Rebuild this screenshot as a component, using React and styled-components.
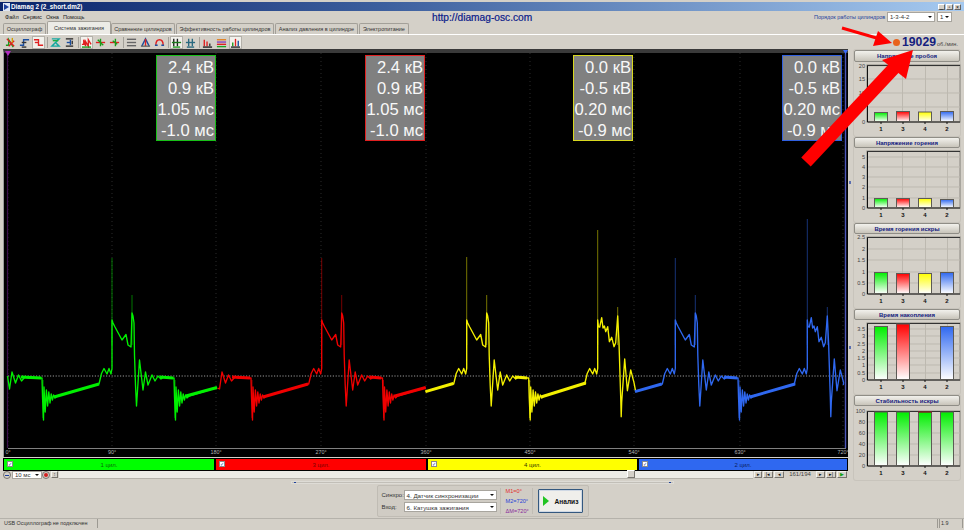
import React from "react";
import styled, { createGlobalStyle } from "styled-components";

const Global = createGlobalStyle`
  html, body { margin: 0; padding: 0; background: #d4d0c8; overflow: hidden; }
  * { box-sizing: border-box; }
`;
const FONT = `"Liberation Sans", Arial, sans-serif`;

const Page = styled.div`
  position: relative; width: 964px; height: 530px; background: #d4d0c8;
  font-family: ${FONT}; display: flex; flex-direction: column; overflow: hidden; color: #222;
`;
const TitleBar = styled.div`
  height: 9px; margin-top: 2px; display: flex; align-items: center; padding: 0 3px;
  background: linear-gradient(90deg, #0a246a 0%, #3d5f9e 40%, #a6caf0 100%);
`;
const TitleText = styled.span`
  color: #fff; font-size: 6.3px; font-weight: bold; margin-left: 1px; line-height: 9px; white-space: nowrap;
`;
const WinButtons = styled.div` margin-left: auto; display: flex; gap: 1px; `;
const WinButton = styled.span`
  width: 7px; height: 6px; background: #d4d0c8; border: 1px solid #666; border-top-color: #fff; border-left-color: #fff;
  font-size: 5px; line-height: 4px; text-align: center; color: #000;
`;
const MenuRow = styled.div` height: 12px; display: flex; align-items: center; position: relative; padding: 0 2px 0 5px; `;
const MenuGroup = styled.div` width: 80px; flex: none; display: flex; `;
const MenuItem = styled.span` font-size: 5.6px; color: #222; margin-right: 4px; white-space: nowrap; `;
const Url = styled.span`
  margin-left: 347px; width: 382px; flex: none; color: #0a1a8a; font-size: 10.2px; white-space: nowrap; -webkit-text-stroke: .2px #0a1a8a;
`;
const OrderLabel = styled.span` color: #1d3f9c; font-size: 5.5px; width: 73px; flex: none; white-space: nowrap; `;
const Combo = styled.div`
  display: flex; align-items: center; justify-content: space-between;
  width: ${p => p.$w}px; height: ${p => p.$h || 10}px; background: #fff; border: 1px solid #a8a59e;
  font-size: ${p => p.$fs || 6}px; padding: 0 2px; color: #333; white-space: nowrap; flex: none;
`;
const Caret = styled.i`
  width: 0; height: 0; border: 2px solid transparent; border-top: 2.5px solid #111; border-bottom: 0; flex: none;
`;
const TabRow = styled.div`
  height: 12px; display: flex; align-items: flex-end; padding-left: 3px; border-bottom: 1px solid #fff;
`;
const Tab = styled.div`
  height: ${p => (p.$active ? 13 : 11)}px; width: ${p => p.$w}px; flex: none; font-size: 5.5px; white-space: nowrap;
  display: flex; align-items: center; justify-content: center; color: #333;
  background: ${p => (p.$active ? "#ecebe6" : "#d4d0c8")};
  border: 1px solid #a3a099; border-bottom: 0; border-radius: 2px 2px 0 0; margin-right: ${p => (p.$active ? 0 : 1)}px;
`;
const Toolbar = styled.div`
  height: 14px; display: flex; align-items: center; padding-left: 4px; position: relative;
`;
const ToolBtn = styled.span`
  width: 13px; height: 13px; display: flex; align-items: center; justify-content: center; flex: none; margin-right: 1px;
  background: ${p => (p.$active ? "#f2f1ec" : "transparent")};
  border: 1px solid ${p => (p.$active ? "#b4b1aa" : "transparent")};
`;
const ToolSep = styled.i` width: 1px; height: 11px; background: #a3a099; margin: 0 1px; flex: none; `;
const Rpm = styled.div` margin-left: auto; display: flex; align-items: baseline; padding-right: 6px; position: relative; `;
const RpmDot = styled.i`
  width: 7px; height: 7px; border-radius: 50%; background: #e8621c; margin-right: 2px; align-self: center;
`;
const RpmValue = styled.span` color: #14207e; font-size: 12.2px; font-weight: bold; line-height: 12px; `;
const RpmUnit = styled.span` color: #444; font-size: 5.6px; margin-left: 1px; `;

const Workspace = styled.div` flex: none; height: 469px; display: flex; padding-left: 3px; `;
const LeftCol = styled.div` width: 845px; flex: none; display: flex; flex-direction: column; `;
const Scope = styled.div`
  position: relative; height: 408px; background: #000; border-top: 4px solid #3a3a3a; border-left: 1px solid #9a9a9a; flex: none;
`;
const ScopeSvg = styled.svg` position: absolute; left: -1px; top: -4px; display: block; `;
const Readout = styled.div`
  position: absolute; top: 2px; left: ${p => p.$x - 4}px; width: 60px; height: 86px; background: #808080;
  border: 1px solid ${p => p.$c}; color: #f8f8f8; font-size: 16.6px; line-height: 21px; text-align: right; padding: 1px 1px 0 0;
  white-space: nowrap;
`;
const ChannelBar = styled.div`
  margin-top: 1px; height: 13px; background: #000; display: flex; gap: 2px; padding: 1px 1px 1px 1px; flex: none;
`;
const Channel = styled.div`
  flex: ${p => p.$w} 0 0; background: ${p => p.$c}; position: relative; display: flex; align-items: center; justify-content: center;
  font-size: 6px; color: ${p => p.$t};
`;
const Check = styled.span`
  position: absolute; left: 3px; top: 2px; width: 6px; height: 6px; background: #fff; border: 1px solid #8a8a8a;
  font-size: 5px; line-height: 4px; color: #123a9c; text-align: center;
`;
const ZoomRow = styled.div` height: 8px; display: flex; align-items: stretch; flex: none; `;
const RoundBtn = styled.span`
  width: 8px; height: 8px; border-radius: 50%; background: #d4d0c8; border: 1px solid #77746e; flex: none;
  display: flex; align-items: center; justify-content: center; margin-right: ${p => p.$mr || 0}px;
`;
const Dot = styled.i` width: 4px; height: ${p => p.$h || 4}px; background: ${p => p.$c}; border-radius: ${p => (p.$h ? 0 : "50%")}; `;
const SmallBtn = styled.span`
  width: ${p => p.$w || 8}px; height: 7px; background: #d4d0c8; border: 1px solid; border-color: #f4f3ef #77746e #77746e #f4f3ef;
  flex: none; display: flex; align-items: center; justify-content: center; font-size: 5px; color: ${p => p.$c || "#111"}; margin-right: 1px;
  line-height: 1;
`;
const Track = styled.div` flex: 1; background: #ecebe6; position: relative; border-bottom: 1px solid #b5b2ab; display: flex; margin-right: 1px; `;
const Thumb = styled.span`
  position: absolute; left: 568px; top: -1px; width: 8px; height: 8px; background: #d4d0c8; border: 1px solid; border-color: #fff #77746e #77746e #fff;
`;
const PageCounter = styled.span`
  width: 30px; height: 7px; background: #d4d0c8; font-size: 6px; line-height: 7px; text-align: center; color: #444; margin-right: 1px; flex: none;
`;
const SliderRow = styled.div` height: 6px; display: flex; align-items: center; justify-content: center; flex: none; padding-left: 114px; `;
const Slider = styled.div`
  width: 383px; height: 3px; background: #c2bfb8; border: 1px solid #dedcd6; display: flex; justify-content: space-between; align-items: center; padding: 0 2px;
`;
const SliderEnd = styled.i` width: 2px; height: 1px; background: #1d3f9c; `;
const ControlsRow = styled.div` flex: 1; display: flex; justify-content: center; padding: 0 0 1px 114px; `;
const ControlBox = styled.div`
  width: 212px; height: 32px; border: 1px solid #c0bcb4; border-radius: 2px; background: #d0ccc4; display: flex; align-items: center; padding-left: 4px;
`;
const SelectGrid = styled.div` display: grid; grid-template-columns: 22px 93px; row-gap: 2px; align-items: center; `;
const FieldLabel = styled.span` font-size: 6px; color: #333; `;
const Markers = styled.div`
  margin-left: 3px; padding: 0 0 0 5px; width: 33px; height: 26px; display: flex; flex-direction: column; justify-content: space-between;
  border-left: 1px solid #c0bcb4; border-right: 1px solid #c0bcb4; font-size: 5.6px;
`;
const Marker = styled.span` color: ${p => p.$c}; white-space: nowrap; `;
const Analyze = styled.div`
  margin-left: 5px; width: 45px; height: 24px; background: #f0efeb; border: 1px solid #34587f; box-shadow: inset 0 0 0 1px #cfd8e4; border-radius: 1px;
  display: flex; align-items: center; padding-left: 4px; font-size: 6.6px; font-weight: bold; color: #111; gap: 6px;
`;
const Play = styled.i` width: 0; height: 0; border-left: 6px solid #22c422; border-top: 5px solid transparent; border-bottom: 5px solid transparent; `;

const Sidebar = styled.div` width: 116px; flex: none; padding: 1px 0 0 6px; position: relative; `;
const Grip = styled.i`
  position: absolute; left: 1px; top: ${p => p.$y}px; width: 2px; height: 3px; background: #5b6fb0;
`;
const Panel = styled.div`
  width: 106px; margin-bottom: 1px; border-radius: 2px; box-shadow: 0 0 0 1px #c8c4bc;
`;
const PanelHead = styled.div`
  height: ${p => p.$h}px; border: 1px solid #8f8d86; border-radius: 2px; background: linear-gradient(#f2f1ec, #c8c4ba);
  color: #14207e; font-size: 6px; font-weight: bold; display: flex; align-items: center; justify-content: center; white-space: nowrap;
`;
const ChartSvg = styled.svg` display: block; width: 112px; height: 74px; margin-left: -3px; `;

const StatusBar = styled.div`
  height: 10px; display: flex; border-top: 1px solid #b5b2ab; padding-left: 4px; font-size: 5.4px; color: #333; flex: none;
`;
const StatusCell = styled.span`
  width: ${p => p.$w}px; flex: ${p => (p.$w ? "none" : 1)}; border-right: 1px solid #9c9992; border-left: ${p => (p.$l ? "1px solid #9c9992" : "0")};
  display: flex; align-items: center; padding-left: ${p => (p.$l ? 1 : 0)}px; white-space: nowrap; margin-right: 1px; line-height: 1;
`;
const Overlay = styled.svg` position: absolute; left: 0; top: 0; pointer-events: none; `;

/* ---- waveform ---- */
const ring = (x, y0) => [[x, y0], [x + 2, 389], [x + 4.5, 372], [x + 8, 383], [x + 11, 375], [x + 14, 381], [x + 17.5, 377], [x + 21, 378]];
const drop = (D, endX, endY) => [[D, 378], [D + .5, 397], [D + 1.5, 420], [D + 2, 387], [D + 3.2, 412], [D + 4.4, 390], [D + 5.6, 406], [D + 6.8, 392], [D + 8, 403], [D + 9.2, 394], [D + 10.4, 400], [D + 11.6, 395], [D + 13, 398], [D + 15, 396], [endX, endY]];
const ev1 = (S, flat) => [[S - 13, 384], [S - 10.5, 373.5], [S - 8, 368.5], [S - 5, 374], [S - 3, 368.5], [S - 1, 374], [S, 368.5], [S, 320], [S + 1, 323], [S + 3, 327], [S + 10, 340], [S + 14, 334.5], [S + 16, 345], [S + 19, 347], [S + 20, 313], [S + 21, 316], [S + 22, 323], [S + 22.5, 355], [S + 23.5, 385], [S + 24.5, 406], [S + 27.5, 360], [S + 31, 390], [S + 33.5, 372], [S + 36, 385], [S + 40, 375], [S + 43, 381], [S + 46, 376], [S + 49, 379], [S + 52, 377], [flat, 378]];
const ev2 = (S, end) => [[S - 13, 384], [S - 10.5, 373.5], [S - 8, 368.5], [S - 5, 374], [S - 3, 368.5], [S - 1, 374], [S, 368.5], [S, 320], [S + .7, 326.7], [S + 2, 327], [S + 4, 317.7], [S + 5.3, 328], [S + 6.7, 326], [S + 8, 331.7], [S + 10, 326.7], [S + 11.7, 341.7], [S + 14, 337.3], [S + 16.3, 346.7], [S + 18, 342.7], [S + 20, 316], [S + 21.3, 343], [S + 23, 397], [S + 23.5, 416.7], [S + 24, 402], [S + 27, 359], [S + 29.7, 390.7], [S + 33, 370], [S + 36.3, 382.7], [S + 38, 391.7]].filter(p => p[0] <= end);
const toD = pts => "M" + pts.map(p => p.join(" ")).join("L");

const WAVES = [
  { c: "#00f000", pts: [...ring(7.5, 376), ...drop(42, 99, 384), ...ev1(112, 173), ...drop(174, 217, 387.5)],
    thick: [[[21, 377], [41, 378]], [[54, 397], [99, 384]], [[160, 377], [173, 378]], [[186, 396], [217, 387.5]]],
    spikes: [[112, 258], [132, 295]], drops: [42, 174] },
  { c: "#f00000", pts: [...ring(217.5, 388), ...drop(251, 308, 384), ...ev1(321.7, 381.5), ...drop(382.5, 425.7, 387.5)],
    thick: [[[232, 377], [250, 378]], [[263, 397], [308, 384]], [[370, 377], [381, 378]], [[395, 396], [425.7, 387.5]]],
    spikes: [[321.7, 258], [341.7, 295]], drops: [251, 382.5] },
  { c: "#f4f000", pts: [[425.5, 391.7], [453.3, 383.5], ...ev1(466.7, 527.7), ...drop(528.7, 585.7, 383), ...ev2(597.7, 636), [635.7, 391.7]],
    thick: [[[425.5, 391.7], [453.3, 383.5]], [[515, 377], [527, 378]], [[541, 397], [585.7, 383]]],
    spikes: [[466.7, 257], [486.7, 295], [597.7, 230], [617.7, 307]], drops: [528.7] },
  { c: "#2f68f0", pts: [[635, 391.7], [661.7, 384], ...ev1(675.3, 737.3), ...drop(738, 795, 384), ...ev2(807.3, 844), [843.3, 385]],
    thick: [[[635, 391.7], [661.7, 384]], [[724, 377], [737, 378]], [[750, 397], [795, 384]]],
    spikes: [[675.3, 258], [695.3, 295], [807.3, 219], [827.3, 307]], drops: [738] },
];
const AXIS = [[8, "0°"], [112, "90°"], [216, "180°"], [321, "270°"], [426, "360°"], [530, "450°"], [634, "540°"], [740, "630°"], [843, "720°"]];

const Wave = ({ w }) => (
  <g fill="none" stroke={w.c} strokeLinejoin="round">
    <path d={toD(w.pts)} strokeWidth="1.35" />
    {w.thick.map((t, i) => <path key={i} d={toD(t)} strokeWidth="2.9" />)}
    {w.spikes.map(([x, y], i) => <path key={i} d={`M${x} 345V${y}`} strokeWidth=".8" opacity=".62" />)}
    {w.drops.map((x, i) => <path key={i} d={`M${x + 1} 380V418`} strokeWidth="1" opacity=".55" />)}
  </g>
);

const ScopeDrawing = () => (
  <ScopeSvg width="845" height="408" viewBox="3 49 845 408">
    {AXIS.map(([x]) => <path key={x} d={`M${x} 53V448`} stroke="#3c3c3c" strokeWidth=".7" strokeDasharray="1 3" />)}
    <path d="M7.5 53V448" stroke="#3c0f4c" strokeWidth="1.2" />
    <path d="M845.5 53V448" stroke="#4a55b8" strokeWidth="1.4" />
    <path d="M5 51h6l-3 5z" fill="#b02cc0" />
    <path d="M843 50h5l-2.5 4z" fill="#3a6cff" />
    <path d="M8 376H846" stroke="#9a9a9a" strokeWidth="1" strokeDasharray="1.2 1.6" />
    {WAVES.map((w, i) => <Wave key={i} w={w} />)}
    <path d="M8 448.5H846" stroke="#808080" strokeWidth="1" />
    {AXIS.map(([x, t]) => <text key={t} x={x} y="454" fontSize="5.4" fill="#b4b4b4" textAnchor="middle" fontFamily={FONT}>{t}</text>)}
  </ScopeSvg>
);

/* ---- toolbar icons ---- */
const ICONS = [
  { a: 0, p: [["M1 9L4 9L4 3L9 11", "#1a9a1a"], ["M2 2L10 10M10 4L4 10", "#e02020"], ["M8 1v5", "#d0a000"]] },
  { a: 0, p: [["M1 9H5V3H11", "#1c4fa0"], ["M3 6H8", "#333"], ["M3 11H8", "#333"]] },
  { a: 1, p: [["M1 3H6V9H11", "#e02020"], ["M2 6H6", "#e02020"]] },
  { s: 1, a: 0, p: [["M2 2H10L6 6L10 10H2L6 6", "#14a8a0"], ["M3 4H9", "#20b040"]] },
  { a: 0, p: [["M2 2H10M2 10H10", "#222"], ["M7 3V9", "#1c4fa0"], ["M3 6H7", "#1c4fa0"], ["M9 4V8", "#333"]] },
  { s: 1, a: 1, p: [["M1 8H3V3L5 10V5L8 10V3L11 8", "#e02020"], ["M1 11H11", "#1a9a1a"]] },
  { a: 0, p: [["M1 6H11", "#e02020"], ["M3 3L9 9M6 2V10", "#1a9a1a"]] },
  { a: 0, p: [["M1 6H11", "#e02020"], ["M7 2V10M4 4L9 8", "#1a9a1a"]] },
  { s: 1, a: 0, p: [["M1 2.5H11", "#666"], ["M1 6H11", "#666"], ["M1 9.5H11", "#666"]] },
  { a: 0, p: [["M2 10L6 2L10 10", "#1c4fa0"], ["M6 2V10", "#e02020"], ["M1 10H11", "#666"]] },
  { a: 0, p: [["M2 9C2 1 10 1 10 9", "#e02020"], ["M1 9H4M8 9H11", "#1c4fa0"]] },
  { s: 1, a: 1, p: [["M3 2V10M7 2V10", "#222"], ["M1 6H11", "#1a7a1a"], ["M2 11H10", "#20a020"]] },
  { a: 0, p: [["M4 2V10M8 2V10", "#2a6a80"], ["M1 6H11", "#2a6a80"], ["M2 11H10", "#2a6a80"]] },
  { s: 1, a: 0, p: [["M2.5 10V3", "#e02020"], ["M5.5 10V5", "#e02020"], ["M8.5 10V7", "#333"], ["M1 11H11", "#222"]] },
  { a: 0, p: [["M1 3H11", "#e08020"], ["M1 5.5H11", "#8040c0"], ["M1 8H11", "#e02020"], ["M1 10.5H11", "#20a020"]] },
  { a: 1, p: [["M3 10V6", "#1a9a1a"], ["M6 10V2", "#e02020"], ["M9 10V4", "#1c4fa0"], ["M1 11H11", "#222"]] },
];
const ToolIcon = ({ paths }) => (
  <svg width="11" height="11" viewBox="0 0 12 12" fill="none" strokeWidth="1.5">
    {paths.map(([d, c], i) => <path key={i} d={d} stroke={c} />)}
  </svg>
);

/* ---- bar charts ---- */
const BARS = [["1", 873, "g"], ["3", 895, "r"], ["4", 917, "y"], ["2", 939, "b"]];
const Chart = ({ y0, plotTop, plotBottom, ticks, tops, labelY, capped }) => (
  <ChartSvg viewBox={`850 ${y0} 112 74`}>
    <rect x="866" y={plotTop} width="93" height={plotBottom - plotTop} fill="none" stroke="#8a8780" />
    {ticks.map(([, y]) => <path key={y} d={`M866 ${y}H959`} stroke="#bdb9b0" />)}
    {[901.5, 924.5, 946.5].map(x => <path key={x} d={`M${x} ${plotTop}V${plotBottom}`} stroke="#bdb9b0" />)}
    <path d={`M866.5 ${plotTop}V${plotBottom}H959`} fill="none" stroke="#111" />
    <path d={`M866 ${plotTop + .5}H959`} stroke="#333" />
    {ticks.map(([t, y]) => <text key={t} x="864" y={y + 2} fontSize="5.6" fill="#444" textAnchor="end" fontFamily={FONT}>{t}</text>)}
    {BARS.map(([label, x, g], i) => (
      <g key={label}>
        {tops[i] !== null && (
          <rect x={x + .5} y={tops[i] + .5} width="13" height={plotBottom - tops[i] - 1} fill={`url(#grad-${capped ? "g" : g})`} stroke="#5c5a55" />
        )}
        {capped && i === 2 && <path d={`M${x} ${tops[i] + .5}h14`} stroke="#8c1010" />}
        <path d={`M${x + 7} ${plotBottom}v2`} stroke="#111" />
        <text x={x + 7} y={labelY} fontSize="6" fontWeight="bold" fill="#111" textAnchor="middle" fontFamily={FONT}>{label}</text>
      </g>
    ))}
  </ChartSvg>
);

const PANELS = [
  { t: "Напряжение пробоя", h: 12, y0: 62, plotTop: 65, plotBottom: 122, labelY: 131, tops: [112, 111, 111.5, 111], ticks: [["20", 66], ["15", 79], ["10", 93], ["5", 107], ["0", 122]] },
  { t: "Напряжение горения", h: 11, y0: 148, plotTop: 151, plotBottom: 208, labelY: 217, tops: [198, 198, 198, 199], ticks: [["5", 157], ["4", 167], ["3", 177], ["2", 187], ["1", 198], ["0", 208]] },
  { t: "Время горения искры", h: 11, y0: 234, plotTop: 237, plotBottom: 294, labelY: 303, tops: [272, 273, 273, 272], ticks: [["2.5", 237], ["2", 249], ["1.5", 260], ["1", 272], ["0.5", 283], ["0", 294]] },
  { t: "Время накопления", h: 11, y0: 320, plotTop: 323, plotBottom: 380, labelY: 389, tops: [326, 323.5, null, 326], ticks: [["3.5", 329], ["3", 336], ["2.5", 344], ["2", 351], ["1.5", 358], ["1", 365], ["0.5", 373], ["0", 380]] },
  { t: "Стабильность искры", h: 11, y0: 406, plotTop: 411, plotBottom: 466, labelY: 475, capped: true, tops: [411.5, 411.5, 411.5, 411.5], ticks: [["100", 411], ["80", 422], ["60", 433], ["40", 444], ["20", 455], ["0", 466]] },
];

const READOUTS = [
  { x: 156, c: "#18c018", v: ["2.4 кВ", "0.9 кВ", "1.05 мс", "-1.0 мс"] },
  { x: 365, c: "#e02020", v: ["2.4 кВ", "0.9 кВ", "1.05 мс", "-1.0 мс"] },
  { x: 573, c: "#d8d820", v: ["0.0 кВ", "-0.5 кВ", "0.20 мс", "-0.9 мс"] },
  { x: 782, c: "#3060e0", v: ["0.0 кВ", "-0.5 кВ", "0.20 мс", "-0.9 мс"] },
];
const TABS = [["Осциллограф", 43], ["Система зажигания", 64, true], ["Сравнение цилиндров", 64], ["Эффективность работы цилиндров", 98], ["Анализ давления в цилиндре", 83], ["Электропитание", 50]];
const MENU = ["Файл", "Сервис", "Окна", "Помощь"];
const CHANNELS = [
  ["1 цил.", "#00ff00", "#0a6a0a", 210], ["3 цил.", "#ff0000", "#7a0000", 210], ["4 цил.", "#ffff00", "#333300", 209], ["2 цил.", "#2f68f0", "#0c1f60", 208],
];

export default function App() {
  return (
    <Page>
      <Global />
      <svg width="0" height="0" style={{ position: "absolute" }}>
        <defs>
          {[["g", "#00ee00"], ["r", "#ff0000"], ["y", "#ffff00"], ["b", "#2f68f0"]].map(([k, c]) => (
            <linearGradient key={k} id={`grad-${k}`} x1="0" y1="0" x2="0" y2="1">
              <stop offset="0" stopColor={c} />
              <stop offset="1" stopColor="#ffffff" />
            </linearGradient>
          ))}
        </defs>
      </svg>
      <TitleBar>
        <svg width="7" height="8" viewBox="0 0 7 8"><rect width="7" height="8" fill="#dfe6f5" /><path d="M1 7V1L6 4z" fill="#1c3f9c" /></svg>
        <TitleText>Diamag 2 (2_short.dm2)</TitleText>
        <WinButtons>
          <WinButton>_</WinButton><WinButton>▫</WinButton><WinButton>×</WinButton>
        </WinButtons>
      </TitleBar>
      <MenuRow>
        <MenuGroup>{MENU.map(m => <MenuItem key={m}>{m}</MenuItem>)}</MenuGroup>
        <Url>http://diamag-osc.com</Url>
        <OrderLabel>Порядок работы цилиндров</OrderLabel>
        <Combo $w={48} $fs={6}>1-3-4-2<Caret /></Combo>
        <Combo $w={15} $fs={6} style={{ marginLeft: 2 }}>1<Caret /></Combo>
      </MenuRow>
      <TabRow>
        {TABS.map(([t, w, a]) => <Tab key={t} $w={w} $active={a}>{t}</Tab>)}
      </TabRow>
      <Toolbar>
        {ICONS.map((ic, i) => (
          <React.Fragment key={i}>
            {ic.s ? <ToolSep /> : null}
            <ToolBtn $active={ic.a}><ToolIcon paths={ic.p} /></ToolBtn>
          </React.Fragment>
        ))}
        <Rpm>
          <RpmDot />
          <RpmValue>19029</RpmValue>
          <RpmUnit>об./мин.</RpmUnit>
        </Rpm>
      </Toolbar>
      <Workspace>
        <LeftCol>
          <Scope>
            <ScopeDrawing />
            {READOUTS.map(r => (
              <Readout key={r.x} $x={r.x} $c={r.c}>
                {r.v.map((l, i) => <div key={i}>{l}</div>)}
              </Readout>
            ))}
          </Scope>
          <ChannelBar>
            {CHANNELS.map(([t, c, tc, w]) => (
              <Channel key={t} $c={c} $t={tc} $w={w}><Check>✓</Check>{t}</Channel>
            ))}
          </ChannelBar>
          <ZoomRow>
            <RoundBtn $mr={1}><Dot $c="#1d3f9c" $h={1} /></RoundBtn>
            <Combo $w={30} $h={8} $fs={6}>10 мс<Caret /></Combo>
            <RoundBtn $mr={1}><Dot $c="#d02020" /></RoundBtn>
            <SmallBtn $w={7} $c="#666">↕</SmallBtn>
            <Track><Thumb /></Track>
            <SmallBtn $w={8}>▸</SmallBtn>
            <SmallBtn $w={10}>|◂</SmallBtn>
            <SmallBtn $w={10}>◂</SmallBtn>
            <PageCounter>161/194</PageCounter>
            <SmallBtn $w={9}>▸</SmallBtn>
            <SmallBtn $w={10}>▸|</SmallBtn>
            <SmallBtn $w={10} $c="#12a012">▶</SmallBtn>
          </ZoomRow>
          <SliderRow>
            <Slider><SliderEnd /><SliderEnd /></Slider>
          </SliderRow>
          <ControlsRow>
            <ControlBox>
              <SelectGrid>
                <FieldLabel>Синхро:</FieldLabel>
                <Combo $w={93} $fs={6.2}>4.  Датчик синхронизации<Caret /></Combo>
                <FieldLabel>Вход:</FieldLabel>
                <Combo $w={93} $fs={6.2}>6.  Катушка зажигания<Caret /></Combo>
              </SelectGrid>
              <Markers>
                <Marker $c="#e03030">M1=0°</Marker>
                <Marker $c="#2a3fd8">M2=720°</Marker>
                <Marker $c="#8a2a9c">ΔM=720°</Marker>
              </Markers>
              <Analyze><Play />Анализ</Analyze>
            </ControlBox>
          </ControlsRow>
        </LeftCol>
        <Sidebar>
          <Grip $y={132} /><Grip $y={297} />
          {PANELS.map(p => (
            <Panel key={p.t}>
              <PanelHead $h={p.h}>{p.t}</PanelHead>
              <Chart {...p} />
            </Panel>
          ))}
        </Sidebar>
      </Workspace>
      <StatusBar>
        <StatusCell $w={94}>USB Осциллограф не подключен</StatusCell>
        <StatusCell />
        <StatusCell $w={24} $l>1.9</StatusCell>
      </StatusBar>
      <Overlay width="964" height="530" viewBox="0 0 964 530">
        <path d="M842 28L880 39" stroke="#ff0000" strokeWidth="3" />
        <path d="M892 43L878 31L873 46z" fill="#ff0000" />
        <path d="M806 162L896 66" stroke="#ff0000" strokeWidth="13" />
        <path d="M913 50L882 60L906 79z" fill="#ff0000" />
      </Overlay>
    </Page>
  );
}
